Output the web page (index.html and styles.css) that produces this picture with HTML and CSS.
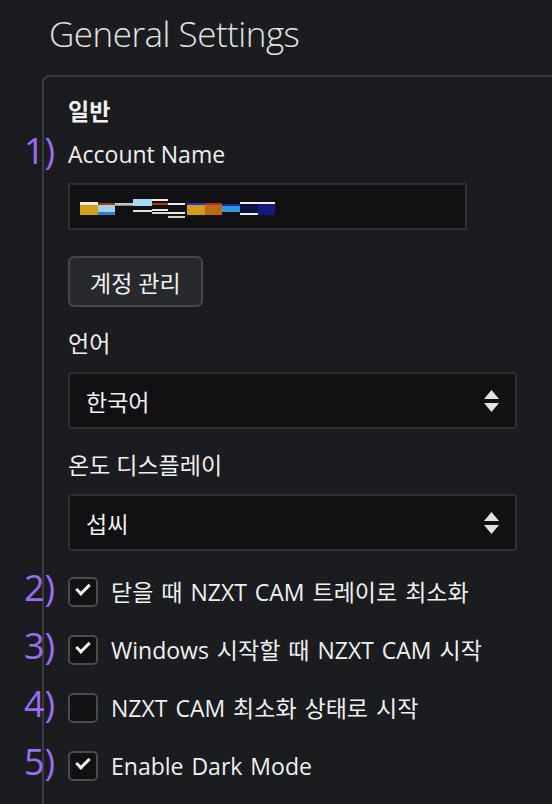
FILE: index.html
```html
<!DOCTYPE html>
<html lang="ko">

<head>
    <meta charset="UTF-8">
    <meta name="viewport" content="width=device-width, initial-scale=1.0">
    <title>General Settings</title>
    <link rel="stylesheet" href="styles.css">
</head>

<body>
    <!-- Page Title -->
    <h1 class="page-title">General Settings</h1>

    <!-- Settings Card -->
    <div class="card">
        <h2 class="section-title">일반</h2>

        <!-- Account -->
        <div class="field">
            <span class="marker">1)</span>
            <label class="field-label">Account Name</label>
            <div class="text-input">
                <svg class="redacted" width="200" height="22" viewBox="0 0 200 22">
                    <rect x="0" y="8" width="18" height="11" fill="#d29e18"/>
                    <rect x="0" y="6" width="18" height="3" fill="#f3ecd8"/>
                    <rect x="18" y="7" width="17" height="12" fill="#9fd2ee"/>
                    <rect x="18" y="16" width="17" height="3" fill="#2f7fc9"/>
                    <rect x="18" y="7" width="17" height="2" fill="#b03818"/>
                    <rect x="35" y="7" width="18" height="2" fill="#9fd2ee"/>
                    <rect x="35" y="9" width="18" height="1" fill="#c47a1a"/>
                    <rect x="53" y="3" width="19" height="7" fill="#a9daf5"/>
                    <rect x="72" y="3" width="16" height="2" fill="#e8e8e8"/>
                    <rect x="72" y="7" width="16" height="2" fill="#b03818"/>
                    <rect x="88" y="7" width="17" height="2" fill="#e8e8e8"/>
                    <rect x="53" y="14" width="19" height="2" fill="#dfe8c8"/>
                    <rect x="72" y="13" width="16" height="2" fill="#e8e8e8"/>
                    <rect x="72" y="16" width="16" height="2" fill="#d8d8d8"/>
                    <rect x="88" y="16" width="17" height="2" fill="#e8e8e8"/>
                    <rect x="88" y="20" width="17" height="2" fill="#d0d0d0"/>
                    <rect x="107" y="8" width="18" height="11" fill="#d29e18"/>
                    <rect x="107" y="7" width="18" height="2" fill="#2234c0"/>
                    <rect x="125" y="8" width="17" height="11" fill="#b86a14"/>
                    <rect x="125" y="7" width="17" height="2" fill="#b03818"/>
                    <rect x="142" y="10" width="18" height="6" fill="#2a9ad8"/>
                    <rect x="142" y="8" width="18" height="2" fill="#1a2ab0"/>
                    <rect x="160" y="6" width="18" height="13" fill="#0d1040"/>
                    <rect x="160" y="6" width="18" height="2" fill="#eeeeee"/>
                    <rect x="160" y="17" width="18" height="2" fill="#eeeeee"/>
                    <rect x="178" y="6" width="17" height="13" fill="#101a80"/>
                    <rect x="178" y="6" width="17" height="2" fill="#eeeeee"/>
                </svg>
            </div>
            <button class="btn">계정 관리</button>
        </div>

        <!-- Language -->
        <div class="field">
            <label class="field-label">언어</label>
            <div class="select">
                <span>한국어</span>
                <svg class="select-arrows" width="15" height="22" viewBox="0 0 15 22">
                    <path d="M7.5 0 L15 9 L0 9 Z" fill="#e2e2e2"/>
                    <path d="M0 13 L15 13 L7.5 22 Z" fill="#e2e2e2"/>
                </svg>
            </div>
        </div>

        <!-- Temperature -->
        <div class="field">
            <label class="field-label">온도 디스플레이</label>
            <div class="select">
                <span>섭씨</span>
                <svg class="select-arrows" width="15" height="22" viewBox="0 0 15 22">
                    <path d="M7.5 0 L15 9 L0 9 Z" fill="#e2e2e2"/>
                    <path d="M0 13 L15 13 L7.5 22 Z" fill="#e2e2e2"/>
                </svg>
            </div>
        </div>

        <!-- Checkboxes -->
        <div class="checks">
            <div class="check-row">
                <span class="marker marker-row">2)</span>
                <span class="box checked"></span>
                <span class="check-label">닫을 때 NZXT CAM 트레이로 최소화</span>
            </div>
            <div class="check-row">
                <span class="marker marker-row">3)</span>
                <span class="box checked"></span>
                <span class="check-label">Windows 시작할 때 NZXT CAM 시작</span>
            </div>
            <div class="check-row">
                <span class="marker marker-row">4)</span>
                <span class="box"></span>
                <span class="check-label">NZXT CAM 최소화 상태로 시작</span>
            </div>
            <div class="check-row">
                <span class="marker marker-row">5)</span>
                <span class="box checked"></span>
                <span class="check-label">Enable Dark Mode</span>
            </div>
        </div>
    </div>
</body>

</html>
```

FILE: styles.css
```css
/* General Styling */
body {
    margin: 0;
    padding: 0;
    background: #1b1c1f;
    color: #f0f0f0;
    font-family: 'Open Sans', 'Noto Sans CJK KR', sans-serif;
    font-size: 23px;
    overflow: hidden;
}

/* Title */
.page-title {
    margin: 0;
    padding: 12px 0 0 49px;
    font-size: 35px;
    font-weight: 300;
    letter-spacing: -0.5px;
    line-height: 44px;
    color: #e2e2e2;
}

/* Card */
.card {
    margin: 19px -20px 0 42px;
    padding: 0 0 40px 24px;
    border: 2px solid #3b3c41;
    border-right: none;
    border-bottom: none;
    border-radius: 8px 0 0 0;
    min-height: 700px;
}

.section-title {
    margin: 0;
    padding-top: 19px;
    font-size: 23px;
    font-weight: 700;
    line-height: 30px;
}

/* Fields */
.field {
    position: relative;
}

.field-label {
    display: block;
    margin-top: 13px;
    line-height: 30px;
}

.field + .field .field-label {
    margin-top: 21px;
}

.marker {
    position: absolute;
    left: -44px;
    top: -3px;
    font-size: 36px;
    line-height: 30px;
    color: #9b6cf2;
}

.text-input {
    margin-top: 14px;
    width: 395px;
    height: 43px;
    border: 2px solid #2f3033;
    background: #111113;
    display: flex;
    align-items: center;
}

.redacted {
    margin-left: 10px;
}

.btn {
    display: block;
    margin-top: 26px;
    height: 51px;
    padding: 0 20px;
    background: #27292d;
    border: 2px solid #45474c;
    border-radius: 6px;
    color: #f0f0f0;
    font-family: inherit;
    font-size: 23px;
}

.select {
    margin-top: 14px;
    width: 413px;
    height: 53px;
    padding: 0 16px;
    border: 2px solid #2f3033;
    border-radius: 4px;
    background: #111113;
    display: flex;
    align-items: center;
    justify-content: space-between;
}

/* Checkboxes */
.checks {
    margin-top: 26px;
    display: flex;
    flex-direction: column;
    gap: 28px;
}

.check-row {
    position: relative;
    display: flex;
    align-items: center;
    gap: 13px;
    height: 30px;
}

.marker-row {
    top: -4px;
}

.box {
    width: 26px;
    height: 26px;
    border: 2px solid #4a4b50;
    border-radius: 5px;
    background: #111113;
    position: relative;
}

.box.checked::after {
    content: "";
    position: absolute;
    left: 6px;
    top: 5px;
    width: 11px;
    height: 5px;
    border-left: 3px solid #f4f4f4;
    border-bottom: 3px solid #f4f4f4;
    transform: rotate(-45deg);
}

.check-label {
    line-height: 30px;
    word-spacing: 2px;
}
```
